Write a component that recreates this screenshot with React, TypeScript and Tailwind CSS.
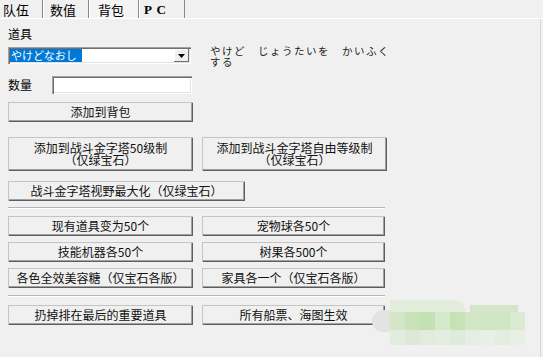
import React from 'react';

const font = "font-['Noto_Sans_CJK_SC','Noto_Sans_CJK_JP',sans-serif]";
const serifBold = "font-bold font-['Liberation_Serif',serif] tracking-[1px]";
const btn =
  'flex items-center justify-center bg-[#f0f0f0] text-[12px] leading-[12px] text-[#111] shadow-[inset_1px_1px_0_#c4c4c4,inset_-1px_-1px_0_#5e5e5e,inset_-2px_-2px_0_#a0a0a0]';
const sunken =
  'bg-white shadow-[inset_1px_1px_0_#a0a0a0,inset_2px_2px_0_#6e6e6e,inset_-1px_-1px_0_#ffffff,inset_-2px_-2px_0_#e3e3e3]';

const Btn: React.FC<{ className?: string; children: React.ReactNode }> = ({ className = '', children }) => (
  <button className={`${btn} ${className}`}>{children}</button>
);

const Separator = () => <div className="w-[377px] border-t border-[#b4b4b4] border-b border-b-white" />;

const wmRow2 = ['#d3e6c8', '#c6e2b6', '#c3e1b2', '#d6e9cc', '#c6e3b5', '#d3e6c8', '#cfe5c3', '#d0e6c5', '#dbebd3'];
const wmRow3 = ['#e3eddf', '#dde9d6', '#e2ecdd', '#e3ede0', '#dfebda', '#e6eee3', '#e8efe5', '#e4ede0', '#e8efe5'];

export default function App() {
  return (
    <div className={`relative w-[543px] h-[357px] overflow-hidden bg-[#f0f0f0] ${font}`}>
      {/* Tabs */}
      <div className="flex h-[19px] border-b border-white">
        <div className="flex items-center w-[43px] pl-[3px] text-[13px] leading-none border-r border-[#8a8a8a]">队伍</div>
        <div className="flex items-center w-[46px] pl-[6px] text-[13px] leading-none border-l border-white border-r border-r-[#8a8a8a]">数值</div>
        <div className="flex items-center w-[50px] pl-[8px] text-[13px] leading-none bg-[#f4f4f4] border-l border-white border-r border-r-[#8a8a8a]">背包</div>
        <div className={`flex items-center w-[46px] pl-[4px] text-[13px] leading-none border-l border-white border-r border-r-[#8a8a8a] ${serifBold}`}>
          P C
        </div>
      </div>

      <div className="h-[338px] border-r border-[#d8d8d8] w-[541px] pl-[8px]">
        {/* 道具 */}
        <div className="text-[12px] leading-none pt-[9px]">道具</div>
        <div className="flex mt-[7px]">
          <div className={`relative w-[183px] h-[17px] ${sunken} flex items-center pl-[2px]`}>
            <span className="bg-[#0078d7] text-white text-[11px] leading-[13px] px-[1px] w-[72px] font-['Noto_Sans_CJK_JP',sans-serif]">
              やけどなおし
            </span>
            <div className="absolute right-[2px] top-[2px] w-[15px] h-[13px] bg-[#f0f0f0] shadow-[inset_-1px_-1px_0_#6e6e6e,inset_1px_1px_0_#ffffff] flex items-center justify-center">
              <svg width="7" height="4" viewBox="0 0 7 4">
                <path d="M0 0h7L3.5 4z" fill="#000" />
              </svg>
            </div>
          </div>
          <div className="ml-[19px] -mt-[2px] w-[182px] text-[10.5px] leading-[11px] tracking-[1.5px] text-[#222] font-['Noto_Sans_CJK_JP',sans-serif]">
            やけど　じょうたいを　かいふく
            <br />
            する
          </div>
        </div>

        {/* 数量 */}
        <div className="flex items-center mt-[9px]">
          <div className="w-[44px] shrink-0 text-[12px] leading-none">数量</div>
          <div className={`w-[140px] h-[18px] shrink-0 ${sunken}`} />
        </div>

        <Btn className="mt-[8px] w-[185px] h-[20px]">添加到背包</Btn>

        <div className="flex gap-[9px] mt-[15px]">
          <Btn className="w-[185px] h-[34px] flex-col">
            <span>添加到战斗金字塔50级制</span>
            <span>（仅绿宝石）</span>
          </Btn>
          <Btn className="w-[185px] h-[34px] flex-col">
            <span>添加到战斗金字塔自由等级制</span>
            <span>（仅绿宝石）</span>
          </Btn>
        </div>

        <Btn className="mt-[10px] w-[237px] h-[20px]">战斗金字塔视野最大化（仅绿宝石）</Btn>

        <div className="mt-[6px]">
          <Separator />
        </div>

        <div className="grid grid-cols-[185px_183px] gap-x-[9px] gap-y-[6px] mt-[7px]">
          <Btn className="h-[20px]">现有道具变为50个</Btn>
          <Btn className="h-[20px]">宠物球各50个</Btn>
          <Btn className="h-[20px]">技能机器各50个</Btn>
          <Btn className="h-[20px]">树果各500个</Btn>
          <Btn className="h-[20px]">各色全效美容糖（仅宝石各版）</Btn>
          <Btn className="h-[20px]">家具各一个（仅宝石各版）</Btn>
        </div>

        <div className="mt-[7px]">
          <Separator />
        </div>

        <div className="grid grid-cols-[185px_183px] gap-x-[9px] mt-[8px]">
          <Btn className="h-[20px]">扔掉排在最后的重要道具</Btn>
          <Btn className="h-[20px]">所有船票、海图生效</Btn>
        </div>
      </div>

      {/* watermark */}
      <div className="absolute left-[372px] top-[310px] w-[22px] h-[22px] rounded-l-full bg-[#e3e3e3]" />
      <div className="absolute left-[390px] top-[300px] w-[75px] h-[12px] rounded-tr-[10px] bg-[#e1ecdb]" />
      <div className="absolute left-[470px] top-[305px] w-[48px] h-[7px] bg-[#d3e6c8]" />
      <div className="absolute left-[390px] top-[312px] flex flex-col">
        <div className="flex">
          {wmRow2.map((c, i) => (
            <div key={i} className="w-[15px] h-[18px]" style={{ background: c }} />
          ))}
        </div>
        <div className="flex">
          {wmRow3.map((c, i) => (
            <div key={i} className="w-[15px] h-[15px]" style={{ background: c }} />
          ))}
        </div>
      </div>
    </div>
  );
}
